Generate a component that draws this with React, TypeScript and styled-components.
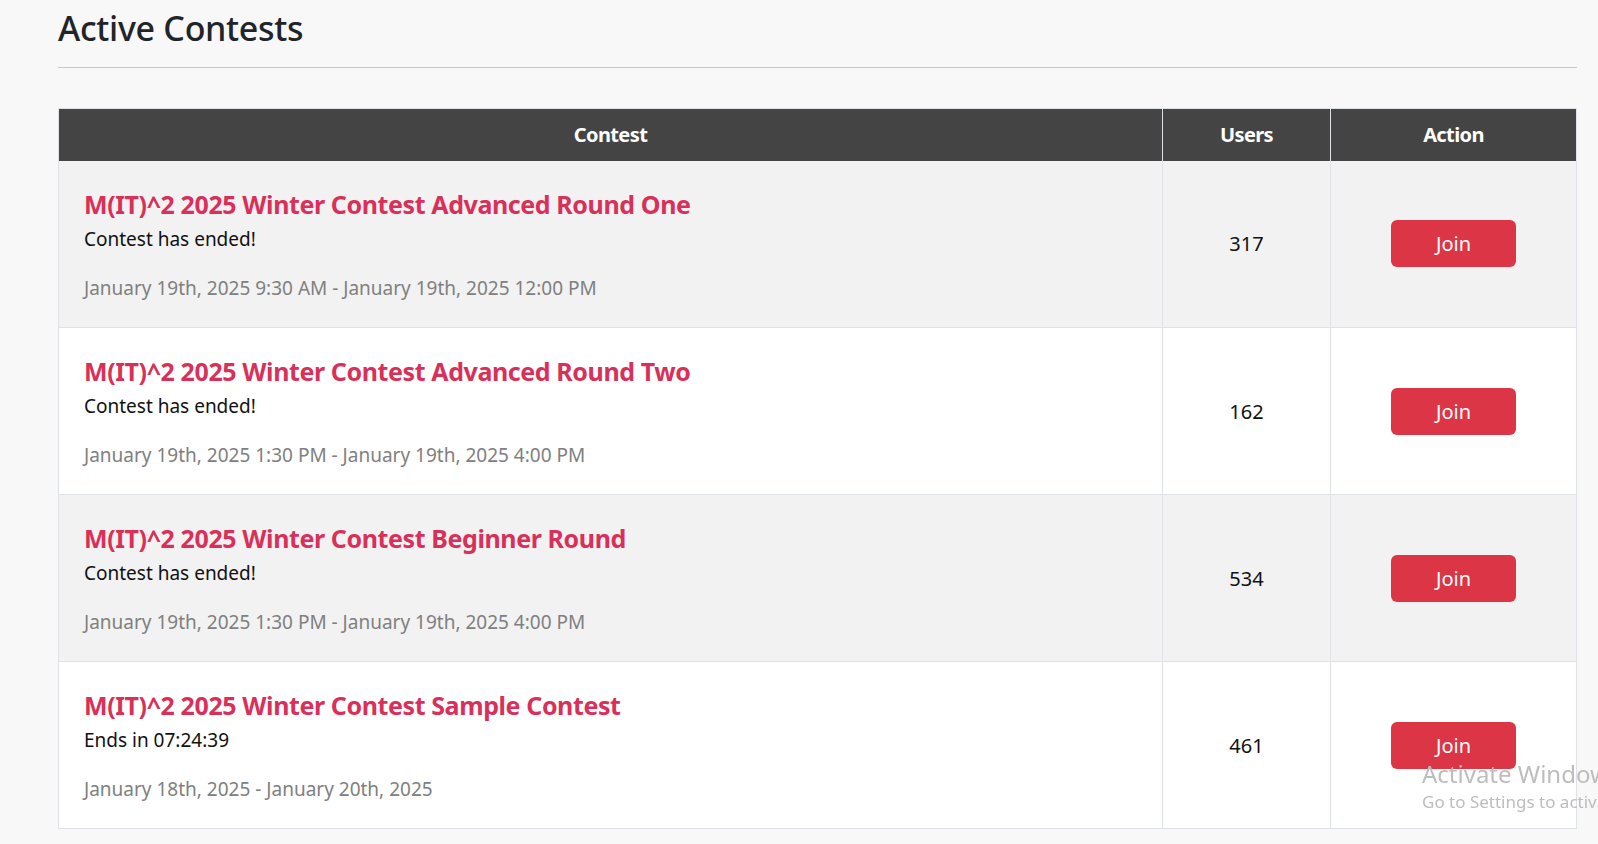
import React from "react";
import styled, { createGlobalStyle } from "styled-components";

const GlobalStyle = createGlobalStyle`
  html, body {
    margin: 0;
    padding: 0;
    background: #f8f8f8;
    overflow: hidden;
  }
  body {
    font-family: "Noto Sans", "Open Sans", sans-serif;
    color: #212529;
  }
  * { box-sizing: border-box; }
`;

const Page = styled.div`
  padding: 0 21px 0 58px;
  height: 844px;
`;

const Title = styled.h1`
  margin: 0;
  padding-top: 6px;
  font-size: 34px;
  line-height: 44px;
  font-weight: 500;
  letter-spacing: -0.3px;
  color: #212529;
`;

const Rule = styled.hr`
  margin: 17px 0 40px;
  border: 0;
  border-top: 1px solid #c8c8c8;
`;

const Table = styled.table`
  width: 100%;
  border-collapse: collapse;
  border: 1px solid #dee2e6;
  table-layout: fixed;
`;

const HeadCell = styled.th<{ $w?: number }>`
  background: #444444;
  color: #ffffff;
  font-size: 20px;
  font-weight: 700;
  letter-spacing: -0.6px;
  height: 52px;
  padding: 0;
  text-align: center;
  border-right: 1px solid #dee2e6;
  width: ${(p) => (p.$w ? `${p.$w}px` : "auto")};
  &:last-child { border-right: 0; }
`;

const Row = styled.tr<{ $striped: boolean }>`
  background: ${(p) => (p.$striped ? "#f2f2f2" : "#ffffff")};
  border-bottom: 1px solid #dee2e6;
`;

const Cell = styled.td`
  border-right: 1px solid #dee2e6;
  height: 167px;
  padding: 0;
  vertical-align: middle;
  text-align: center;
  font-size: 20px;
  color: #111;
`;

const ContestCell = styled.td`
  border-right: 1px solid #dee2e6;
  height: 167px;
  padding: 27px 25px 20px;
  vertical-align: top;
  text-align: left;
`;

const ContestName = styled.a`
  display: block;
  color: #d9305a;
  font-size: 25px;
  font-weight: 700;
  letter-spacing: -0.4px;
  line-height: 32px;
  text-decoration: none;
`;

const Status = styled.div`
  margin-top: 5px;
  font-size: 19px;
  line-height: 28px;
  color: #111;
`;

const Dates = styled.div`
  margin-top: 21px;
  font-size: 19px;
  line-height: 28px;
  color: #808080;
`;

const JoinButton = styled.button`
  width: 125px;
  height: 47px;
  border: 0;
  border-radius: 6px;
  background: #dc3545;
  color: #ffffff;
  font-family: inherit;
  font-size: 20px;
  cursor: pointer;
`;

const Watermark = styled.div`
  position: fixed;
  left: 1422px;
  top: 758px;
  white-space: nowrap;
  color: #bdbdbd;
  pointer-events: none;
`;

const WatermarkTitle = styled.div`
  font-size: 24px;
  line-height: 32px;
`;

const WatermarkSub = styled.div`
  font-size: 17px;
  line-height: 24px;
`;

const contests = [
  {
    name: "M(IT)^2 2025 Winter Contest Advanced Round One",
    status: "Contest has ended!",
    dates: "January 19th, 2025 9:30 AM - January 19th, 2025 12:00 PM",
    users: 317,
  },
  {
    name: "M(IT)^2 2025 Winter Contest Advanced Round Two",
    status: "Contest has ended!",
    dates: "January 19th, 2025 1:30 PM - January 19th, 2025 4:00 PM",
    users: 162,
  },
  {
    name: "M(IT)^2 2025 Winter Contest Beginner Round",
    status: "Contest has ended!",
    dates: "January 19th, 2025 1:30 PM - January 19th, 2025 4:00 PM",
    users: 534,
  },
  {
    name: "M(IT)^2 2025 Winter Contest Sample Contest",
    status: "Ends in 07:24:39",
    dates: "January 18th, 2025 - January 20th, 2025",
    users: 461,
  },
];

export default function App() {
  return (
    <>
      <GlobalStyle />
      <Page>
        <Title>Active Contests</Title>
        <Rule />
        <Table>
          <thead>
            <tr>
              <HeadCell>Contest</HeadCell>
              <HeadCell $w={168}>Users</HeadCell>
              <HeadCell $w={246}>Action</HeadCell>
            </tr>
          </thead>
          <tbody>
            {contests.map((c, i) => (
              <Row key={c.name} $striped={i % 2 === 0}>
                <ContestCell>
                  <ContestName href="#">{c.name}</ContestName>
                  <Status>{c.status}</Status>
                  <Dates>{c.dates}</Dates>
                </ContestCell>
                <Cell>{c.users}</Cell>
                <Cell>
                  <JoinButton>Join</JoinButton>
                </Cell>
              </Row>
            ))}
          </tbody>
        </Table>
      </Page>
      <Watermark>
        <WatermarkTitle>Activate Windows</WatermarkTitle>
        <WatermarkSub>Go to Settings to activate Windows.</WatermarkSub>
      </Watermark>
    </>
  );
}
